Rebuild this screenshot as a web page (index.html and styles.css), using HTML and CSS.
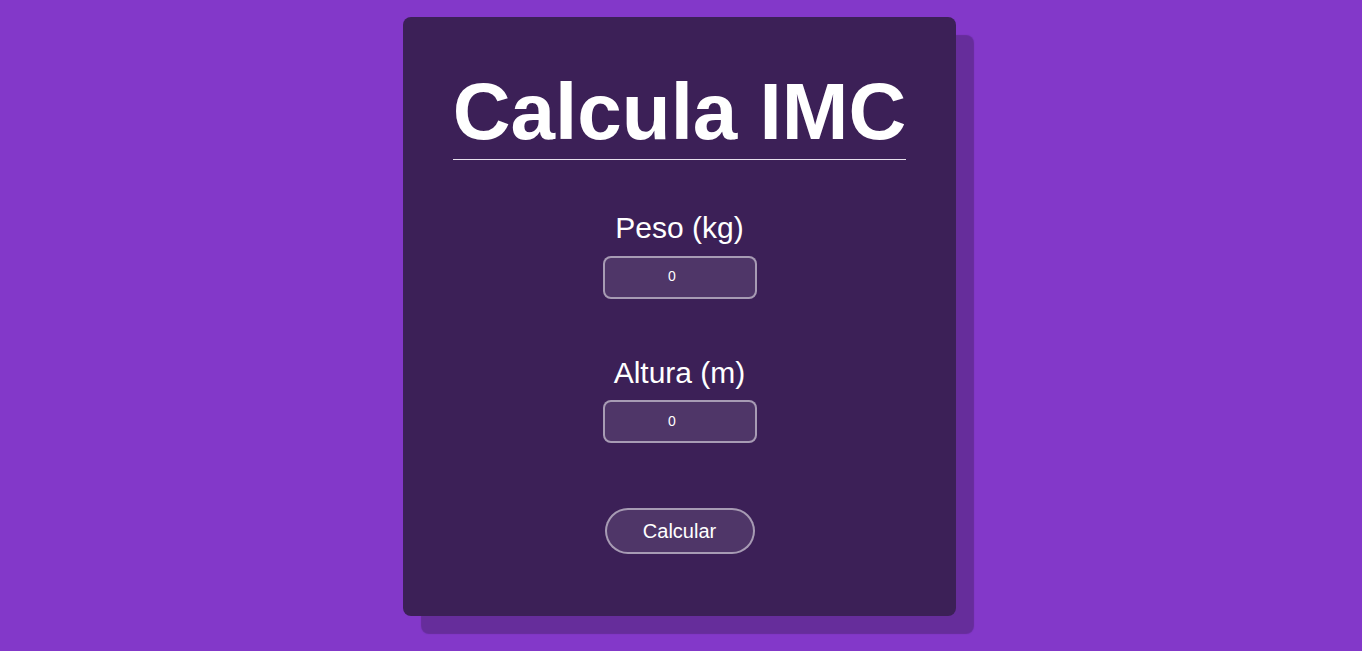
FILE: index.html
```html
<!DOCTYPE html>
<html lang="pt">
<head>
<meta charset="utf-8">
<title>Calcula IMC</title>
<link rel="stylesheet" href="styles.css">
</head>
<body>
<main class="card">
  <h1 class="title">Calcula IMC</h1>
  <div class="field field-peso">
    <label class="label" for="peso">Peso (kg)</label>
    <input class="input" id="peso" type="number" value="0">
  </div>
  <div class="field field-altura">
    <label class="label" for="altura">Altura (m)</label>
    <input class="input" id="altura" type="number" value="0">
  </div>
  <button class="btn" type="button">Calcular</button>
</main>
</body>
</html>
```
FILE: styles.css
```css
html, body {
  margin: 0;
  padding: 0;
  background: #8338c9;
  height: 100%;
}
body {
  display: flex;
  justify-content: center;
  align-items: flex-start;
  font-family: "Liberation Sans", Arial, sans-serif;
  color: #ffffff;
  overflow: hidden;
}
.card {
  box-sizing: border-box;
  width: 553px;
  height: 599px;
  margin-top: 17px;
  margin-right: 3px;
  padding-top: 49px;
  background: #3c2057;
  border-radius: 8px;
  box-shadow: 18px 18px 1px #662d9b;
  display: flex;
  flex-direction: column;
  align-items: center;
}
.title {
  margin: 0;
  font-size: 80px;
  font-weight: bold;
  line-height: 92px;
  padding-bottom: 1px;
  border-bottom: 1px solid #e6e0ec;
  white-space: nowrap;
}
.field {
  display: flex;
  flex-direction: column;
  align-items: center;
}
.field-peso {
  margin-top: 51px;
}
.field-altura {
  margin-top: 57px;
}
.label {
  display: block;
  font-size: 30px;
  line-height: 34.5px;
  margin-bottom: 10px;
}
.input {
  box-sizing: border-box;
  width: 154px;
  height: 43px;
  padding-bottom: 3px;
  border: 2px solid rgba(255, 255, 255, 0.5);
  border-radius: 8px;
  background: rgba(255, 255, 255, 0.1);
  color: #ffffff;
  font-family: "Liberation Sans Narrow", "Liberation Sans", sans-serif;
  font-size: 14px;
  text-align: center;
  outline: none;
}
.btn {
  box-sizing: border-box;
  margin-top: 65px;
  width: 150px;
  height: 46px;
  border: 2px solid rgba(255, 255, 255, 0.5);
  border-radius: 23px;
  background: rgba(255, 255, 255, 0.1);
  color: #ffffff;
  font-family: "Liberation Sans", Arial, sans-serif;
  font-size: 20px;
  cursor: pointer;
}
```
